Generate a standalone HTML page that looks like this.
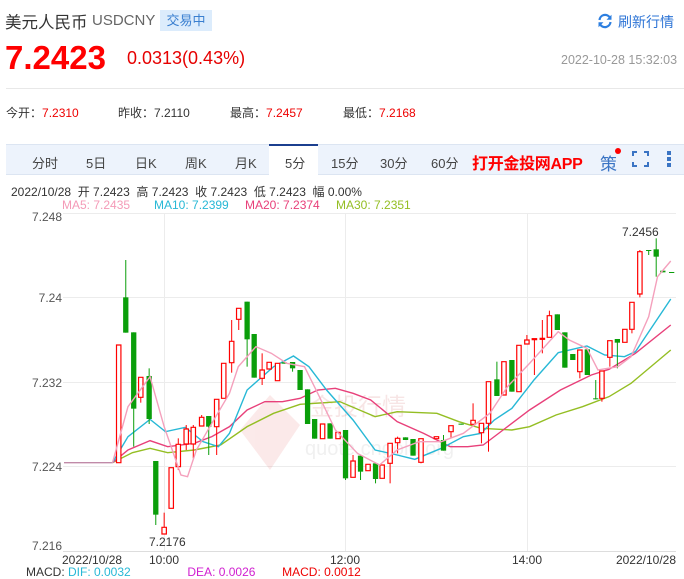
<!DOCTYPE html>
<html><head><meta charset="utf-8"><style>
*{margin:0;padding:0;box-sizing:border-box}
body{width:684px;height:569px;overflow:hidden;background:#fff;font-family:"Liberation Sans","Noto Sans CJK SC",sans-serif;position:relative;color:#333}
.a{position:absolute;white-space:nowrap}
</style></head><body>
<div class="a" style="left:5px;top:9px;font-size:16.5px;color:#333">美元人民币</div>
<div class="a" style="left:92px;top:12px;font-size:15px;color:#666">USDCNY</div>
<div class="a" style="left:160px;top:10px;width:52px;height:21px;background:#dcecfc;color:#3a7fd0;font-size:13px;line-height:21px;text-align:center">交易中</div>
<svg class="a" style="left:597px;top:13px" width="16" height="16" viewBox="0 0 16 16"><path d="M2.5 7A5.6 5.6 0 0 1 12.6 4.2" fill="none" stroke="#2d7fe0" stroke-width="2.2"/><path d="M13.5 9A5.6 5.6 0 0 1 3.4 11.8" fill="none" stroke="#2d7fe0" stroke-width="2.2"/><path d="M14.5 1.8V6.8H9.5Z" fill="#2d7fe0"/><path d="M1.5 14.2V9.2H6.5Z" fill="#2d7fe0"/></svg>
<div class="a" style="left:618px;top:12px;font-size:14px;color:#2d74d6">刷新行情</div>
<div class="a" style="left:5px;top:39px;font-size:33px;font-weight:bold;color:#f00">7.2423</div>
<div class="a" style="left:127px;top:48px;font-size:18px;color:#e60000">0.0313(0.43%)</div>
<div class="a" style="left:561px;top:53px;font-size:12.5px;color:#999">2022-10-28 15:32:03</div>
<div class="a" style="left:6px;top:88px;width:678px;height:1px;background:#e8e8e8"></div>
<div class="a" style="left:6px;top:104px;font-size:12px;color:#333">今开：<span style="color:#e00">7.2310</span></div>
<div class="a" style="left:118px;top:104px;font-size:12px;color:#333">昨收：7.2110</div>
<div class="a" style="left:230px;top:104px;font-size:12px;color:#333">最高：<span style="color:#e00">7.2457</span></div>
<div class="a" style="left:343px;top:104px;font-size:12px;color:#333">最低：<span style="color:#e00">7.2168</span></div>
<div class="a" style="left:6px;top:144px;width:678px;height:31px;background:#edf3fc;border-top:1px solid #dce5f2;border-bottom:1px solid #dce5f2"></div>
<div class="a" style="left:269px;top:144px;width:49px;height:32px;background:#fff;border-top:2px solid #1b3f8f"></div>
<div class="a" style="top:153px;font-size:13px;color:#444;left:0;width:684px">
<span class="a" style="left:32px">分时</span><span class="a" style="left:86px">5日</span><span class="a" style="left:135px">日K</span><span class="a" style="left:185px">周K</span><span class="a" style="left:235px">月K</span><span class="a" style="left:285px">5分</span><span class="a" style="left:331px">15分</span><span class="a" style="left:380px">30分</span><span class="a" style="left:431px">60分</span></div>
<div class="a" style="left:472px;top:150px;font-size:16px;font-weight:bold;color:#f00;letter-spacing:-0.3px">打开金投网APP</div>
<div class="a" style="left:600px;top:150px;font-size:17px;color:#3a74c4">策</div>
<div class="a" style="left:615px;top:148px;width:6px;height:6px;border-radius:3px;background:#f00"></div>
<svg class="a" style="left:632px;top:151px" width="17" height="16"><path d="M1 5V1H5M12 1H16V5M16 11V15H12M5 15H1V11" fill="none" stroke="#3a74c4" stroke-width="2"/></svg>
<div class="a" style="left:667px;top:151px;width:4px;height:4px;background:#3a74c4;box-shadow:0 6px 0 #3a74c4,0 12px 0 #3a74c4"></div>
<div class="a" style="left:11px;top:183px;font-size:12px;color:#333">2022/10/28 &nbsp;开 7.2423 &nbsp;高 7.2423 &nbsp;收 7.2423 &nbsp;低 7.2423 &nbsp;幅 0.00%</div>
<div class="a" style="left:62px;top:198px;font-size:12px;color:#f49ab7">MA5: 7.2435</div>
<div class="a" style="left:154px;top:198px;font-size:12px;color:#27b8d6">MA10: 7.2399</div>
<div class="a" style="left:245px;top:198px;font-size:12px;color:#e8407a">MA20: 7.2374</div>
<div class="a" style="left:336px;top:198px;font-size:12px;color:#94be23">MA30: 7.2351</div>
<svg class="a" style="left:0;top:0" width="684" height="569">
<g stroke="#ececec" stroke-width="1">
<line x1="63" y1="213.5" x2="676" y2="213.5"/><line x1="63" y1="297.5" x2="676" y2="297.5"/><line x1="63" y1="382.5" x2="676" y2="382.5"/><line x1="63" y1="466.5" x2="676" y2="466.5"/><line x1="63" y1="551.5" x2="676" y2="551.5" stroke="#ddd"/>
<line x1="164.5" y1="213" x2="164.5" y2="551"/><line x1="345.5" y1="213" x2="345.5" y2="551"/><line x1="527.5" y1="213" x2="527.5" y2="551"/>
</g>
<g font-size="12" fill="#555" text-anchor="end" font-family="Liberation Sans,sans-serif">
<text x="62" y="221">7.248</text><text x="62" y="302">7.24</text><text x="62" y="387">7.232</text><text x="62" y="471">7.224</text><text x="62" y="550">7.216</text>
</g>
<g font-size="12" fill="#333" font-family="Liberation Sans,sans-serif">
<text x="62" y="564">2022/10/28</text><text x="164" y="564" text-anchor="middle">10:00</text><text x="345" y="564" text-anchor="middle">12:00</text><text x="527" y="564" text-anchor="middle">14:00</text><text x="676" y="564" text-anchor="end">2022/10/28</text>
<text x="149" y="546">7.2176</text><text x="622" y="236">7.2456</text>
</g>
<g opacity="0.12" font-family="Liberation Sans,Noto Sans CJK SC,sans-serif"><path d="M270 395L300 425L270 470L240 430Z" fill="#e05050"/><text x="310" y="415" font-size="24" fill="#c03030">金投行情</text><text x="305" y="455" font-size="20" fill="#888">quote.cngold.org</text></g>
<g id="c" transform="translate(0,220) scale(0.44129,0.33333)"></g>
</svg>
<div class="a" style="left:26px;top:565px;font-size:12px;color:#333">MACD: <span style="color:#27b8d6">DIF: 0.0032</span> &nbsp; &nbsp; &nbsp; &nbsp; &nbsp; &nbsp; &nbsp; &nbsp; <span style="color:#d020d0">DEA: 0.0026</span> &nbsp; &nbsp; &nbsp; &nbsp;<span style="color:#e00">MACD: 0.0012</span></div>
<script>
var d=[['r',269,375,728],['g',285,232,338,120,338],['g',303,337,566,337,680],['r',319,472,532,472,548],['g',338,468,597,445,612],['g',353,723,884,723,915],['r',372,922,942,878,942],['r',388,743,865],['r',404,673,740,655,750],['r',422,627,672,615,690],['r',438,622,672,615,715],['r',457,592,618,585,618],['g',473,588,620,588,705],['r',491,538,620,538,705],['r',507,430,535],['r',525,364,428,300,458],['r',541,265,298,265,330],['g',560,245,358,245,440],['g',576,342,473],['r',594,450,475,400,495],['r',610,427,447],['r',629,430,482],['g',644,427,431],['g',663,426,445,426,455],['g',680,450,510],['g',697,508,612],['g',713,597,656],['r',731,612,656],['g',748,610,656],['r',766,637,656],['g',783,630,775,630,780],['r',800,723,772,705,772],['g',817,707,755,707,780],['r',834,733,752],['g',851,730,777,730,790],['r',866,735,775],['r',884,670,730,670,790],['r',901,655,668,650,700],['g',919,652,660],['g',936,657,707],['r',954,656,727,656,730],['r',989,650,656],['g',1005,660,692,645,692],['r',1022,617,635,617,655],['g',1045,611,614],['r',1072,601,613,550,613],['r',1091,610,638,610,670],['r',1107,485,610,485,695],['g',1126,478,528,425,528],['r',1142,425,525],['g',1160,420,515],['r',1176,376,515],['r',1194,360,372,345,372],['r',1211,356,358,356,465],['r',1229,355,357,300,400],['r',1245,287,352,272,352],['g',1263,283,330],['g',1280,337,443],['g',1298,402,420],['r',1314,390,455,390,475],['g',1331,388,465],['g',1350,535,538,480,538],['r',1364,453,535,453,545],['r',1382,362,412,362,440],['g',1399,357,368,357,445],['r',1416,328,367],['r',1432,247,328,247,340],['r',1450,95,222,90,232],['g',1470,90,93,90,105],['g',1487,88,110,55,170],['g',1502,152,157],['g',1522,156,158]];
var s='';
function P(a,c){return '<polyline vector-effect="non-scaling-stroke" fill="none" stroke="'+c+'" stroke-width="1.4" points="'+a.join(' ')+'"/>';}
s+=P([145,728,255,728],'#c08aa8');
s+=P([255,728,300,698,340,685,380,698,440,690,500,675,560,620,620,580,680,553,770,545,850,590,900,575,990,580,1040,605,1090,625,1160,630,1200,620,1260,585,1320,560,1380,530,1430,490,1520,390],'#94be23');
s+=P([255,728,290,690,340,662,380,680,440,670,480,650,520,620,560,570,600,545,640,545,680,535,720,510,760,505,800,520,840,540,900,605,960,640,1020,680,1060,680,1095,675,1140,630,1200,570,1270,510,1340,465,1380,448,1440,400,1520,315],'#e8407a');
s+=P([255,728,290,650,340,598,375,635,420,622,460,665,495,680,520,640,560,510,620,440,665,408,700,440,740,510,800,600,850,690,900,705,940,718,1000,685,1050,650,1090,640,1120,600,1160,565,1210,480,1265,398,1330,378,1370,405,1415,410,1440,395,1520,237],'#27b8d6');
d.forEach(function(c){var col=c[0]=='r'?'#f00':'#0a9e0a';var wt=c[4]||c[2],wb=c[5]||c[3];
s+='<line vector-effect="non-scaling-stroke" stroke="'+col+'" x1="'+c[1]+'" x2="'+c[1]+'" y1="'+wt+'" y2="'+wb+'"/>';
var h=Math.max(c[3]-c[2],3);
if(c[0]=='r')s+='<rect vector-effect="non-scaling-stroke" x="'+(c[1]-5)+'" y="'+c[2]+'" width="10" height="'+h+'" fill="#fff" stroke="#f00" stroke-width="1.2"/>';
else s+='<rect x="'+(c[1]-6)+'" y="'+c[2]+'" width="12" height="'+h+'" fill="#0a9e0a"/>';});
s+=P([255,728,290,560,340,470,372,620,410,765,425,770,445,690,480,610,520,520,540,440,580,380,615,400,650,430,690,440,720,520,760,630,810,700,860,735,900,690,950,665,1000,665,1050,640,1110,580,1150,500,1200,430,1265,335,1290,360,1330,385,1355,450,1400,440,1430,410,1470,290,1490,170,1520,123],'#f4a0bc');
document.getElementById('c').innerHTML=s;
</script>
</body></html>
